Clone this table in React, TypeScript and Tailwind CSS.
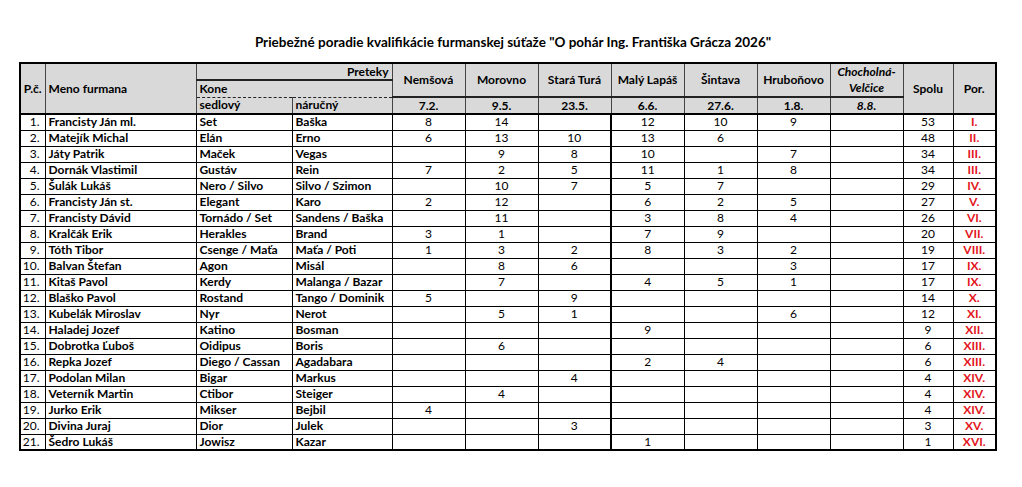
const RACES = [
  { name: 'Nemšová', date: '7.2.' },
  { name: 'Morovno', date: '9.5.' },
  { name: 'Stará Turá', date: '23.5.' },
  { name: 'Malý Lapáš', date: '6.6.' },
  { name: 'Šintava', date: '27.6.' },
  { name: 'Hruboňovo', date: '1.8.' },
];

type Row = [string, string, string, (number | null)[], number, string];

const ROWS: Row[] = [
  ['Francisty Ján ml.', 'Set', 'Baška', [8, 14, null, 12, 10, 9, null], 53, 'I.'],
  ['Matejík Michal', 'Elán', 'Erno', [6, 13, 10, 13, 6, null, null], 48, 'II.'],
  ['Játy Patrik', 'Maček', 'Vegas', [null, 9, 8, 10, null, 7, null], 34, 'III.'],
  ['Dornák Vlastimil', 'Gustáv', 'Rein', [7, 2, 5, 11, 1, 8, null], 34, 'III.'],
  ['Šulák Lukáš', 'Nero / Silvo', 'Silvo / Szimon', [null, 10, 7, 5, 7, null, null], 29, 'IV.'],
  ['Francisty Ján st.', 'Elegant', 'Karo', [2, 12, null, 6, 2, 5, null], 27, 'V.'],
  ['Francisty Dávid', 'Tornádo / Set', 'Sandens / Baška', [null, 11, null, 3, 8, 4, null], 26, 'VI.'],
  ['Kralčák Erik', 'Herakles', 'Brand', [3, 1, null, 7, 9, null, null], 20, 'VII.'],
  ['Tóth Tibor', 'Csenge / Maťa', 'Maťa / Poti', [1, 3, 2, 8, 3, 2, null], 19, 'VIII.'],
  ['Balvan Štefan', 'Agon', 'Misál', [null, 8, 6, null, null, 3, null], 17, 'IX.'],
  ['Kitaš Pavol', 'Kerdy', 'Malanga / Bazar', [null, 7, null, 4, 5, 1, null], 17, 'IX.'],
  ['Blaško Pavol', 'Rostand', 'Tango / Dominik', [5, null, 9, null, null, null, null], 14, 'X.'],
  ['Kubelák Miroslav', 'Nyr', 'Nerot', [null, 5, 1, null, null, 6, null], 12, 'XI.'],
  ['Haladej Jozef', 'Katino', 'Bosman', [null, null, null, 9, null, null, null], 9, 'XII.'],
  ['Dobrotka Ľuboš', 'Oidipus', 'Boris', [null, 6, null, null, null, null, null], 6, 'XIII.'],
  ['Repka Jozef', 'Diego / Cassan', 'Agadabara', [null, null, null, 2, 4, null, null], 6, 'XIII.'],
  ['Podolan Milan', 'Bigar', 'Markus', [null, null, 4, null, null, null, null], 4, 'XIV.'],
  ['Veterník Martin', 'Ctibor', 'Steiger', [null, 4, null, null, null, null, null], 4, 'XIV.'],
  ['Jurko Erik', 'Mikser', 'Bejbil', [4, null, null, null, null, null, null], 4, 'XIV.'],
  ['Divina Juraj', 'Dior', 'Julek', [null, null, 3, null, null, null, null], 3, 'XV.'],
  ['Šedro Lukáš', 'Jowisz', 'Kazar', [null, null, null, 1, null, null, null], 1, 'XVI.'],
];

export default function App() {
  return (
    <div className="w-[1022px] h-[487px] bg-white text-black font-['Lato','Open_Sans',sans-serif]">
      <h1 className="pt-[34px] h-[62px] text-center text-[13.5px] font-bold leading-[16px] pl-[4px]">
        Priebežné poradie kvalifikácie furmanskej súťaže "O pohár Ing. Františka Grácza 2026"
      </h1>

      <table className="ml-[19px] border-collapse border-2 border-black table-fixed text-[12px] leading-[14px]">
        <colgroup>
          <col className="w-[25px]" />
          <col className="w-[151px]" />
          <col className="w-[96px]" />
          <col className="w-[100px]" />
          {[...RACES, null].map((_, i) => (
            <col key={i} className="w-[73px]" />
          ))}
          <col className="w-[50px]" />
          <col className="w-[43px]" />
        </colgroup>

        {/* Header */}
        <thead className="bg-[#d9d9d9] font-bold">
          <tr className="h-[17px]">
            <th rowSpan={3} className="border border-[#444] border-b-2 border-b-black text-center px-0">P.č.</th>
            <th rowSpan={3} className="border border-[#444] border-b-2 border-b-black text-left pl-[3px]">Meno furmana</th>
            <th colSpan={2} className="border-b-2 border-b-[#222] text-right pr-[3px] py-0">Preteky</th>
            {RACES.map((r) => (
              <th key={r.name} rowSpan={2} className="border-x border-[#444] text-center">{r.name}</th>
            ))}
            <th rowSpan={2} className="border-x border-[#444] text-center italic leading-[16px]">
              Chocholná-
              <br />
              Velčice
            </th>
            <th rowSpan={3} className="border border-[#444] border-b-2 border-b-black text-center">Spolu</th>
            <th rowSpan={3} className="border border-[#444] border-b-2 border-b-black text-center">Por.</th>
          </tr>
          <tr className="h-[17px]">
            <th colSpan={2} className="border-b border-dashed border-b-[#222] text-left pl-[3px]">Kone</th>
          </tr>
          <tr className="h-[17px]">
            <th className="border-r border-[#444] border-b-2 border-b-black text-left pl-[3px]">sedlový</th>
            <th className="border-b-2 border-b-black text-left pl-[3px]">náručný</th>
            {RACES.map((r) => (
              <th key={r.date} className="border-x border-[#444] border-t-2 border-t-[#222] border-b-2 border-b-black text-center">
                {r.date}
              </th>
            ))}
            <th className="border-x border-[#444] border-t-2 border-t-[#222] border-b-2 border-b-black text-center italic">8.8.</th>
          </tr>
        </thead>

        {/* Results */}
        <tbody>
          {ROWS.map(([name, saddle, hand, points, total, place], i) => (
            <tr key={name} className="h-[16px]">
              <td className="border border-black text-right pr-[5px] py-0">{i + 1}.</td>
              <td className="border border-black pl-[3px] py-0 font-bold whitespace-nowrap">{name}</td>
              <td className="border border-black pl-[3px] py-0 font-bold whitespace-nowrap">{saddle}</td>
              <td className="border border-black pl-[3px] py-0 font-bold whitespace-nowrap">{hand}</td>
              {points.map((p, j) => (
                <td
                  key={j}
                  className={
                    j === 2
                      ? 'border border-black border-r-2 text-center py-0'
                      : 'border border-black text-center py-0'
                  }
                >
                  {p ?? ''}
                </td>
              ))}
              <td className="border border-black text-center py-0">{total}</td>
              <td className="border border-black text-center py-0 font-bold text-[#e3141b]">{place}</td>
            </tr>
          ))}
        </tbody>
      </table>
    </div>
  );
}
